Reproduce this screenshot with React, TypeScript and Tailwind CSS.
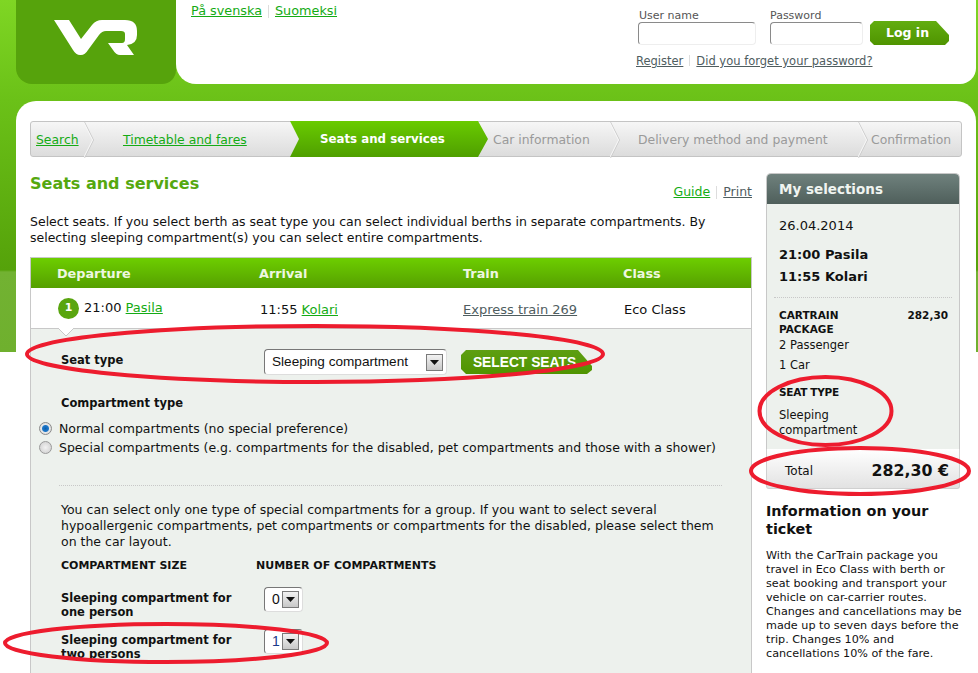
import React from "react";

function Caret() {
  return (
    <span className="w-[17px] h-[17px] border border-[#7a7a7a] bg-[linear-gradient(to_bottom,#f2f2f2,#c8c8c8)] flex items-center justify-center shrink-0">
      <svg width="9" height="5" viewBox="0 0 9 5"><path d="M0 0H9L4.500 5Z" fill="#111" /></svg>
    </span>
  );
}

function Sep({ left }: { left: number }) {
  return (
    <svg className="absolute top-0" style={{ left }} width="11" height="36" viewBox="0 0 11 36" fill="none">
      <path d="M0.500 0L9.500 18L0.500 36" stroke="#c9c9c9" />
      <path d="M-0.500 0L8.500 18L-0.500 36" stroke="#f7f7f7" />
    </svg>
  );
}

function Ellipses() {
  return (
    <svg className="absolute inset-0 pointer-events-none" width="978" height="673" viewBox="0 0 978 673" fill="none" stroke="#ed1c2e" strokeWidth="4">
      <ellipse cx="315" cy="354" rx="288" ry="28" />
      <ellipse cx="825.500" cy="411" rx="66" ry="34" />
      <ellipse cx="860" cy="471" rx="109" ry="23" />
      <ellipse cx="166" cy="643" rx="161" ry="19" />
    </svg>
  );
}

export default function App() {
  return (
    <div className="relative w-[978px] h-[673px] overflow-hidden font-['DejaVu_Sans',sans-serif] text-[12.500px] text-[#111] bg-[linear-gradient(to_bottom,#7fd624_0px,#6bc118_100px,#55a20a_270px,#72b232_272px,#6fb02e_352px,#ffffff_352px,#ffffff_100%)]">
      <div className="pl-4 pr-[2px]">
        {/* header */}
        <div className="flex h-[84px]">
          <div className="w-[160px] bg-[#56a30c] rounded-bl-[16px] rounded-br-[14px] shrink-0">
            <svg className="ml-[38px] mt-[20px]" width="84" height="36" viewBox="54 20 84 36">
              <path d="M54 20H69L81 39L92 25Q96 20 102 20H125Q137 20 137 31V35Q137 44 127 45L134 55H120Q116 55 113 50L108 43H122Q125 43 125 39V34Q125 31 121 31H106Q102 31 99 35L88 50Q85 55 81 55H80Q76 55 73 50Z" fill="#fff" />
            </svg>
          </div>
          <div className="flex-1 bg-white rounded-bl-[20px] rounded-br-[16px] flex justify-between">
            <div className="pl-[15px] pt-[3px] flex items-start text-[12.800px] leading-[16px]">
              <a className="text-[#14ab14] underline">På svenska</a>
              <span className="w-px h-[13px] bg-[#dddddd] mx-[6px] mt-[2px]" />
              <a className="text-[#14ab14] underline">Suomeksi</a>
            </div>
            <div className="w-[338px] pt-[10px] text-[11px] leading-[12px] text-[#555]">
              <div className="flex">
                <div className="w-[132px]">
                  <div className="pl-[1px]">User name</div>
                  <div className="w-[118px] h-[23px] border border-[#8a8a8a] border-b-[#eeeeee] border-r-[#eeeeee] rounded-[4px]" />
                </div>
                <div className="w-[100px]">
                  <div>Password</div>
                  <div className="w-[93px] h-[23px] border border-[#8a8a8a] border-b-[#eeeeee] border-r-[#eeeeee] rounded-[4px]" />
                </div>
                <div className="w-[79px] h-[24px] mt-[11px] bg-[linear-gradient(to_bottom,#62ad10,#4f9400)] text-white font-bold text-[12.500px] leading-[24px] pl-[16px] [clip-path:polygon(0_4px,4px_0,66px_0,100%_14px,100%_20px,75px_100%,4px_100%,0_20px)]">Log in</div>
              </div>
              <div className="flex items-start mt-[9px] -ml-[2px] text-[11.500px] text-[#4f5d5f] leading-[14px]">
                <a className="underline">Register</a>
                <span className="w-px h-[11px] bg-[#dddddd] mx-[6px] mt-[1px]" />
                <a className="underline">Did you forget your password?</a>
              </div>
            </div>
          </div>
        </div>
        {/* main */}
        <div className="mt-[17px] bg-white rounded-t-[20px] pl-[14px] pt-[20px]">
          <div className="relative flex w-[932px] h-[36px] text-[12.400px] leading-[36px] text-[#9a9a9a] border-y border-[#c4c4c4] rounded-[3px] bg-[linear-gradient(to_bottom,#f6f6f6,#dcdcdc)] border-x">
            <Sep left={53} />
            <Sep left={579} />
            <Sep left={827} />
            <div className="w-[53px] pl-[5px] shrink-0"><a className="text-[#14ab14] underline">Search</a></div>
            <div className="w-[206px] pl-[39px] shrink-0"><a className="text-[#14ab14] underline">Timetable and fares</a></div>
            <div className="w-[198px] -mr-[10px] shrink-0 pl-[30px] -my-px h-[36px] text-[11.800px] font-bold text-white bg-[linear-gradient(to_bottom,#69cb00,#4f9f00)] [clip-path:polygon(0_0,188px_0,100%_50%,188px_100%,0_100%,9px_50%)] relative">Seats and services</div>
            <div className="w-[132px] pl-[15px] shrink-0">Car information</div>
            <div className="w-[248px] pl-[28px] shrink-0">Delivery method and payment</div>
            <div className="pl-[13px] shrink-0">Confirmation</div>
          </div>

          <div className="flex">
            <div className="w-[722px] shrink-0">
              <div className="flex justify-between items-end h-[41px]">
                <h1 className="font-bold text-[16px] leading-[20px] text-[#55a80f] mb-[4px]">Seats and services</h1>
                <div className="flex leading-[16px] -mb-[2px] pr-0">
                  <a className="text-[#14ab14] underline">Guide</a>
                  <span className="w-px h-[13px] bg-[#dddddd] mx-[6px] mt-[2px]" />
                  <a className="text-[#4f5d5f] underline">Print</a>
                </div>
              </div>
              <p className="mt-[16px] leading-[16px]">Select seats. If you select berth as seat type you can select individual berths in separate compartments. By<br />selecting sleeping compartment(s) you can select entire compartments.</p>
              {/* table */}
              <div className="mt-[11px] border-x border-t border-[#c8c8c8]">
                <div className="flex h-[30px] leading-[31px] font-bold text-[12.800px] text-[#eef7e0] bg-[linear-gradient(to_bottom,#6dce00,#559f00)]">
                  <div className="w-[228px] pl-[26px]">Departure</div>
                  <div className="w-[204px]">Arrival</div>
                  <div className="w-[160px]">Train</div>
                  <div>Class</div>
                </div>
                <div className="flex h-[41px] items-center border-b border-[#c8c8c8] text-[13px] pt-[3px]">
                  <div className="w-[228px] pl-[27px] flex items-center -mt-[3px]">
                    <span className="w-[21px] h-[21px] rounded-full bg-[#59a50f] text-white font-bold text-[11px] flex items-center justify-center mr-[5px]">1</span>
                    <span>21:00 <a className="text-[#14ab14] underline">Pasila</a></span>
                  </div>
                  <div className="w-[204px] pl-[1px]">11:55 <a className="text-[#14ab14] underline">Kolari</a></div>
                  <div className="w-[160px]"><a className="text-[#4f5d5f] underline">Express train 269</a></div>
                  <div className="pl-[1px]">Eco Class</div>
                </div>
                <div className="relative bg-[#edf1ed] h-[345px] pl-[30px] pt-[20px]">
                  <svg className="absolute left-[27px] -top-px" width="16" height="8" viewBox="0 0 16 8"><path d="M0 0L8 8L16 0" fill="#fff" stroke="#c8c8c8" /></svg>
                  <div className="flex items-center h-[26px]">
                    <div className="w-[203px] font-bold text-[11.500px] -mt-[2px]">Seat type</div>
                    <div className="w-[183px] h-[26px] pt-px border border-[#777] border-r-[#dddddd] border-b-[#dddddd] rounded-[4px] bg-white flex items-center justify-between pl-[7px] pr-[3px] font-['Liberation_Sans',sans-serif] text-[13.600px]">
                      Sleeping compartment
                      <Caret />
                    </div>
                    <div className="ml-[14px] w-[131px] h-[24px] pr-[4px] bg-[linear-gradient(to_bottom,#5e9f12,#4f9400)] text-white font-bold text-[13.800px] leading-[26px] text-center font-['Liberation_Sans',sans-serif] [clip-path:polygon(0_5px,5px_0,117px_0,100%_16px,100%_20px,126px_100%,5px_100%,0_19px)]">SELECT SEATS</div>
                  </div>
                  <div className="font-bold text-[11.500px] leading-[16px] mt-[20px]">Compartment type</div>
                  <div className="-ml-[22px] mt-[8px] leading-[19px]">
                    <div className="flex items-center">
                      <span className="w-[13px] h-[13px] rounded-full border border-[#8a8a8a] bg-[radial-gradient(circle,#0a5fb0_0px,#1f78c8_3px,#e8e8e8_4px,#d0d0d0_100%)] mr-[7px]" />
                      Normal compartments (no special preference)
                    </div>
                    <div className="flex items-center">
                      <span className="w-[13px] h-[13px] rounded-full border border-[#9a9a9a] bg-[radial-gradient(circle,#f2f2f2,#cccccc)] mr-[7px]" />
                      Special compartments (e.g. compartments for the disabled, pet compartments and those with a shower)
                    </div>
                  </div>
                  <div className="-ml-[2px] mr-[29px] mt-[28px] border-t border-dotted border-[#c8c8c8]" />
                  <p className="mt-[16px] leading-[16px]">You can select only one type of special compartments for a group. If you want to select several<br />hypoallergenic compartments, pet compartments or compartments for the disabled, please select them<br />on the car layout.</p>
                  <div className="flex font-bold text-[11px] leading-[14px] mt-[9px]">
                    <div className="w-[195px]">COMPARTMENT SIZE</div>
                    <div>NUMBER OF COMPARTMENTS</div>
                  </div>
                  <div className="flex items-start mt-[14px] h-[42px]">
                    <div className="w-[203px] font-bold text-[11.500px] leading-[14px] pt-[4px]">Sleeping compartment for<br />one person</div>
                    <div className="w-[39px] h-[25px] border border-[#777] border-r-[#dddddd] border-b-[#dddddd] rounded-[4px] bg-white flex items-center justify-between pl-[7px] pr-[3px] font-['Liberation_Sans',sans-serif] text-[14px]">0<Caret /></div>
                  </div>
                  <div className="flex items-start">
                    <div className="w-[203px] font-bold text-[11.500px] leading-[14px] pt-[4px]">Sleeping compartment for<br />two persons</div>
                    <div className="w-[39px] h-[25px] border border-[#777] border-r-[#dddddd] border-b-[#dddddd] rounded-[4px] bg-white flex items-center justify-between pl-[7px] pr-[3px] font-['Liberation_Sans',sans-serif] text-[14px] text-[#1a3a8a]">1<Caret /></div>
                  </div>
                </div>
              </div>
            </div>

            {/* sidebar */}
            <div className="w-[194px] ml-[14px] shrink-0">
              <div className="mt-[16px] border-x border-t border-[#c8c8c8] rounded-t-[5px] overflow-hidden">
                <div className="h-[30px] leading-[30px] pl-[12px] font-bold text-[13.500px] text-[#f0f4f0] bg-[linear-gradient(to_bottom,#6f817d,#4f5f5b)]">My selections</div>
                <div className="bg-[#edf1ed] h-[245px] pl-[12px] pr-[11px] pt-[14px] text-[13px]">
                  <div className="leading-[16px]">26.04.2014</div>
                  <div className="font-bold leading-[22px] mt-[10px]">21:00 Pasila<br />11:55 Kolari</div>
                  <div className="border-t border-dotted border-[#c8c8c8] -ml-[5px] -mr-[4px] mt-[9px]" />
                  <div className="flex justify-between font-bold text-[10.500px] leading-[14px] mt-[10px]">
                    <div>CARTRAIN<br />PACKAGE</div>
                    <div>282,30</div>
                  </div>
                  <div className="text-[11.500px] leading-[20px] -mt-[3px] pt-[2px]">2 Passenger<br />1 Car</div>
                  <div className="font-bold text-[10.500px] leading-[14px] mt-[10px] tracking-[-0.300px]">SEAT TYPE</div>
                  <div className="text-[11.500px] leading-[15px] mt-[9px]">Sleeping<br />compartment</div>
                </div>
              </div>
              <div className="h-[40px] pt-[4px] border-x border-b border-[#d0d0d0] rounded-b-[3px] bg-[linear-gradient(to_bottom,#ffffff,#e2e2e2)] flex items-center justify-between pl-[18px] pr-[10px]">
                <span className="text-[12px]">Total</span>
                <span className="font-bold text-[15.800px]">282,30 €</span>
              </div>
              <h2 className="font-bold text-[14.400px] leading-[18px] mt-[13px]">Information on your<br />ticket</h2>
              <p className="text-[11.200px] leading-[14px] mt-[11px] whitespace-nowrap">With the CarTrain package you<br />travel in Eco Class with berth or<br />seat booking and transport your<br />vehicle on car-carrier routes.<br />Changes and cancellations may be<br />made up to seven days before the<br />trip. Changes 10% and<br />cancellations 10% of the fare.</p>
            </div>
          </div>
        </div>
      </div>
      <Ellipses />
    </div>
  );
}
